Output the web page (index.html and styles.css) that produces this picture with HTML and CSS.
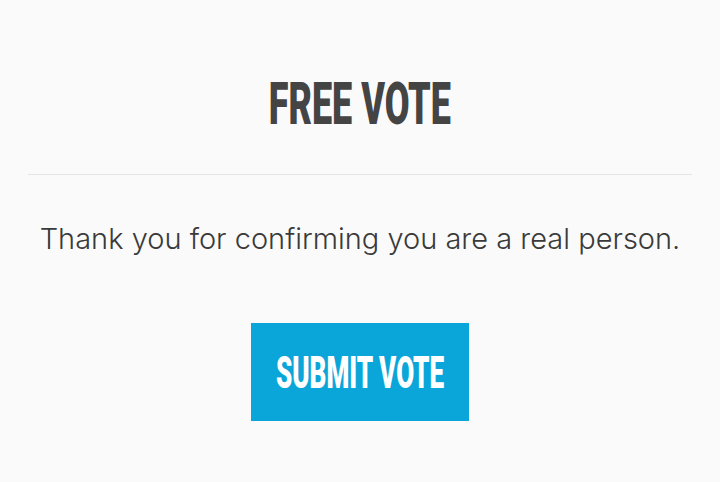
FILE: index.html
```html
<!DOCTYPE html>
<html>
<head>
  <meta charset="UTF-8" />
  <title>Free Vote</title>
  <link rel="stylesheet" href="styles.css">
</head>
<body>
  <div class="vote-box">
    <h1 class="vote-title"><span class="narrow">FREE VOTE</span></h1>
    <hr class="divider" />
    <p class="vote-message">Thank you for confirming you are a real person.</p>
    <button type="button" class="submit-btn"><span class="narrow">SUBMIT VOTE</span></button>
  </div>
</body>
</html>
```

FILE: styles.css
```css
body {
  margin: 0;
  background: #fafafa;
  font-family: Inter, "Noto Sans", sans-serif;
}
.vote-box {
  padding: 74px 28px 0;
  text-align: center;
}
/* condensed display lettering */
.narrow {
  display: inline-block;
  white-space: nowrap;
  transform: scaleX(0.6);
}
.vote-title {
  margin: 0 0 40px;
  font-family: Roboto, "Liberation Sans", sans-serif;
  font-weight: 900;
  font-size: 60px;
  line-height: 60px;
  color: #444;
}
.divider {
  margin: 0;
  border: none;
  border-top: 1px solid #e4e4e4;
}
.vote-message {
  margin: 44px 0 0;
  font-weight: 300;
  font-size: 29px;
  line-height: 40px;
  color: #3a3a3a;
}
.submit-btn {
  display: flex;
  align-items: center;
  justify-content: center;
  margin: 64px auto 0;
  width: 218px;
  height: 98px;
  border: none;
  padding: 0;
  background: #0ba6d9;
  color: #fff;
  font-family: Roboto, "Liberation Sans", sans-serif;
  font-weight: 900;
  font-size: 45px;
  cursor: pointer;
}
.submit-btn .narrow {
  transform: scaleX(0.58);
}
```
